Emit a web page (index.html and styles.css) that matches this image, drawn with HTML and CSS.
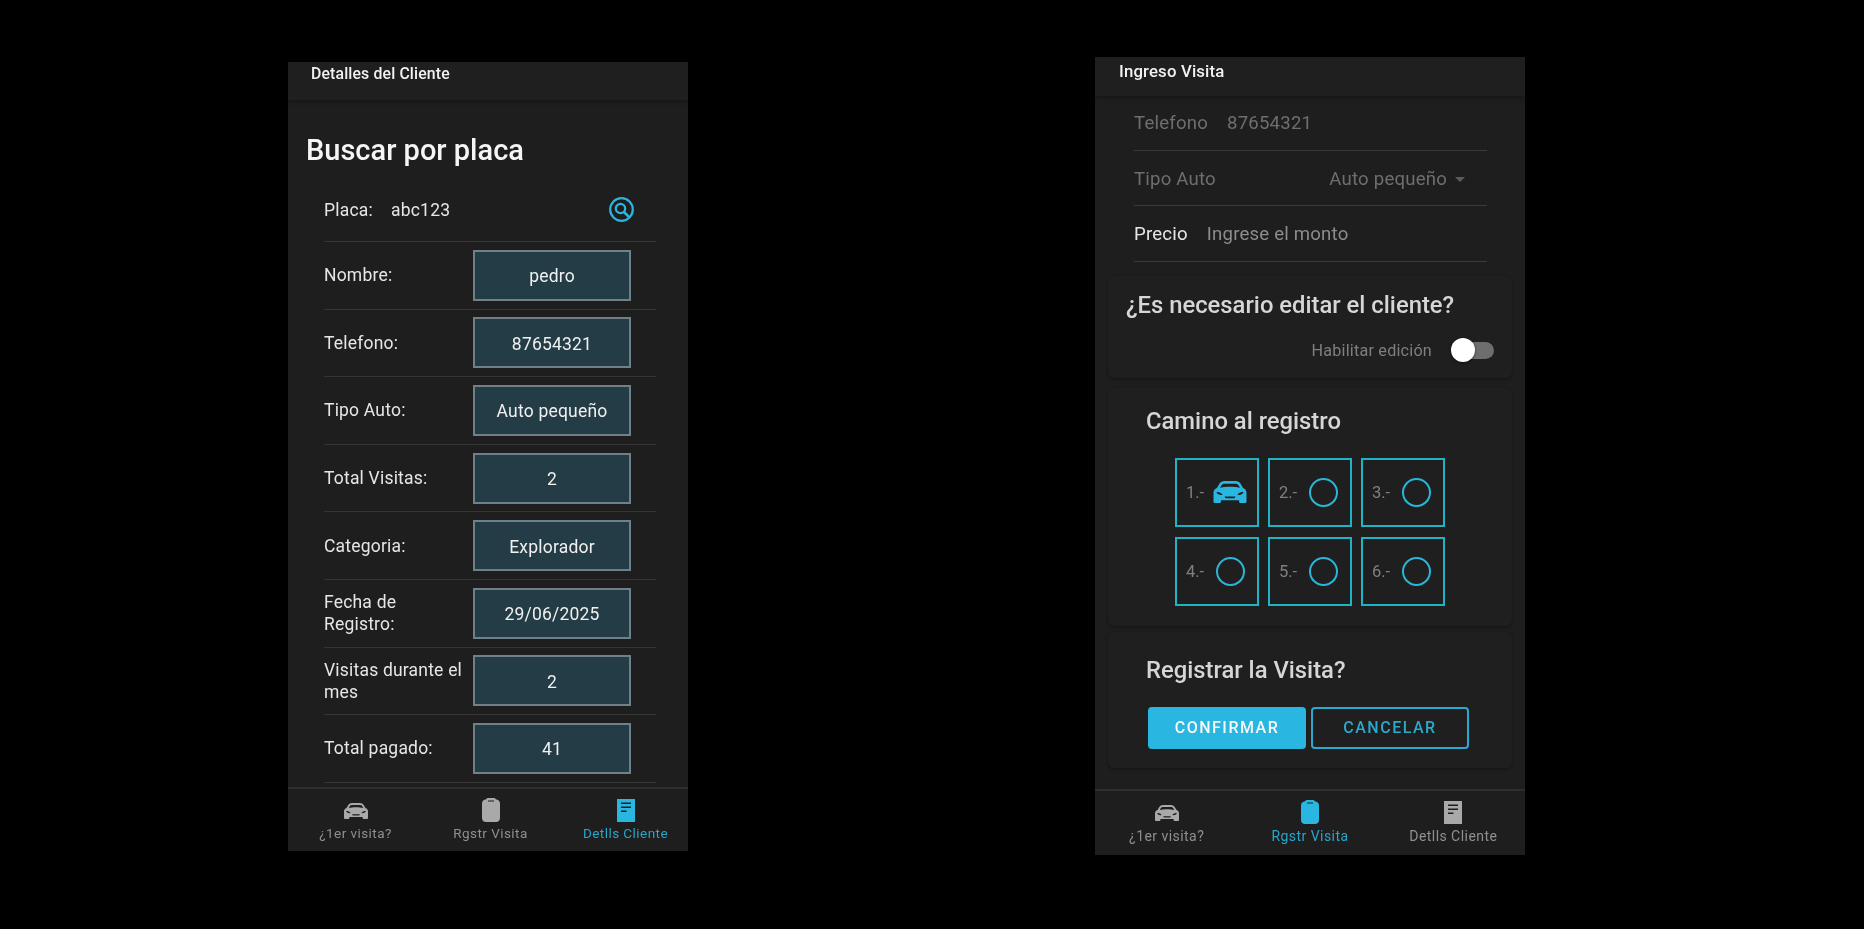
FILE: index.html
```html
<!DOCTYPE html>
<html lang="es">
<head>
  <meta charset="UTF-8" />
  <meta name="viewport" content="width=device-width, initial-scale=1.0"/>
  <title>Visitas</title>
  <link rel="stylesheet" href="styles.css">
</head>
<body>
  <svg class="sprite" xmlns="http://www.w3.org/2000/svg">
    <symbol id="icon-car" viewBox="0 0 24 16">
      <path fill-rule="evenodd" d="M8 0h8c1.600 0 2.900.7 3.700 2l1.800 3c1.500.7 2.500 1.800 2.500 3.400V15a1 1 0 0 1-1 1h-3.400a1 1 0 0 1-1-1v-1H5.400v1a1 1 0 0 1-1 1H1a1 1 0 0 1-1-1V8.400C0 6.800 1 5.700 2.500 5l1.800-3C5.100.7 6.400 0 8 0zM8 2c-1 0-1.800.4-2.300 1.200L4.800 5c2-.6 4.600-.8 7.200-.8s5.200.2 7.200.8l-.9-1.800C17.800 2.400 17 2 16 2zM2.200 8c0 1 1.300 2 3.800 2.200.4 0 .5-.5.2-.8C5.200 8.400 3.500 7.800 2.200 8zM21.800 8c0 1-1.300 2-3.800 2.200-.4 0-.5-.5-.2-.8 1-1 2.700-1.600 4-1.400zM8 11.300h8l-.8 1.200H8.800z"/>
    </symbol>
    <symbol id="icon-clipboard" viewBox="0 0 18 24">
      <path fill-rule="evenodd" d="M6 0h6c1 0 1.500.6 1.800 1.300C16.300 1.600 18 3 18 5.500V20c0 2.400-1.600 4-4 4H4c-2.400 0-4-1.600-4-4V5.500C0 3 1.700 1.600 4.200 1.300 4.500.6 5 0 6 0zM6 2.400v1.100h6V2.400z"/>
    </symbol>
    <symbol id="icon-doc" viewBox="0 0 18 23">
      <path fill-rule="evenodd" d="M0 0h18v23H0zM4 3.500v1.400h10V3.500zM4 7.500v1.400h10V7.500zM4 11.500v1.400h5.500v-1.400z"/>
    </symbol>
  </svg>

  <!-- pantalla detalles -->
  <div class="phone phone-detail">
    <div class="app-bar"><span>Detalles del Cliente</span></div>
    <div class="phone-content">
      <h1 class="search-title">Buscar por placa</h1>
      <div class="info-list">
        <div class="search-row">
          <span class="search-label">Placa:</span>
          <span class="search-value">abc123</span>
          <svg class="search-icon" viewBox="0 0 25 25">
            <circle cx="12.500" cy="12.500" r="11.300" fill="none" stroke="currentColor" stroke-width="2.200"/>
            <circle cx="11.500" cy="11.500" r="4.700" fill="none" stroke="currentColor" stroke-width="2.200"/>
            <path d="M15 15l4 4" stroke="currentColor" stroke-width="2.600" stroke-linecap="round"/>
          </svg>
        </div>
        <div class="info-row"><div class="info-label">Nombre:</div><div class="info-box">pedro</div></div>
        <div class="info-row"><div class="info-label">Telefono:</div><div class="info-box">87654321</div></div>
        <div class="info-row"><div class="info-label">Tipo Auto:</div><div class="info-box">Auto pequeño</div></div>
        <div class="info-row"><div class="info-label">Total Visitas:</div><div class="info-box">2</div></div>
        <div class="info-row"><div class="info-label">Categoria:</div><div class="info-box">Explorador</div></div>
        <div class="info-row"><div class="info-label">Fecha de Registro:</div><div class="info-box">29/06/2025</div></div>
        <div class="info-row"><div class="info-label">Visitas durante el mes</div><div class="info-box">2</div></div>
        <div class="info-row"><div class="info-label">Total pagado:</div><div class="info-box">41</div></div>
      </div>
    </div>
    <div class="bottom-nav">
      <div class="nav-item"><svg class="nav-car"><use href="#icon-car"/></svg><span>¿1er visita?</span></div>
      <div class="nav-item"><svg class="nav-clip"><use href="#icon-clipboard"/></svg><span>Rgstr Visita</span></div>
      <div class="nav-item active"><svg class="nav-doc"><use href="#icon-doc"/></svg><span>Detlls Cliente</span></div>
    </div>
  </div>

  <!-- pantalla ingreso -->
  <div class="phone phone-visit">
    <div class="app-bar"><span>Ingreso Visita</span></div>
    <div class="phone-content">
      <div class="form-list">
        <div class="form-row disabled"><span class="form-label">Telefono</span><span>87654321</span></div>
        <div class="form-row disabled between">
          <span class="form-label">Tipo Auto</span>
          <span class="form-select">Auto pequeño<i class="caret"></i></span>
        </div>
        <div class="form-row"><span class="form-label">Precio</span><span class="placeholder">Ingrese el monto</span></div>
      </div>

      <div class="card card-edit">
        <h2 class="card-title">¿Es necesario editar el cliente?</h2>
        <div class="toggle-row">
          <span>Habilitar edición</span>
          <div class="toggle"><div class="toggle-thumb"></div></div>
        </div>
      </div>

      <div class="card card-steps">
        <h2 class="card-title">Camino al registro</h2>
        <div class="step-grid">
          <div class="step"><span>1.-</span><svg class="step-car"><use href="#icon-car"/></svg></div>
          <div class="step"><span>2.-</span><i class="step-dot"></i></div>
          <div class="step"><span>3.-</span><i class="step-dot"></i></div>
          <div class="step"><span>4.-</span><i class="step-dot"></i></div>
          <div class="step"><span>5.-</span><i class="step-dot"></i></div>
          <div class="step"><span>6.-</span><i class="step-dot"></i></div>
        </div>
      </div>

      <div class="card card-confirm">
        <h2 class="card-title">Registrar la Visita?</h2>
        <div class="button-row">
          <button class="btn btn-fill">CONFIRMAR</button>
          <button class="btn btn-line">CANCELAR</button>
        </div>
      </div>
    </div>
    <div class="bottom-nav">
      <div class="nav-item"><svg class="nav-car"><use href="#icon-car"/></svg><span>¿1er visita?</span></div>
      <div class="nav-item active"><svg class="nav-clip"><use href="#icon-clipboard"/></svg><span>Rgstr Visita</span></div>
      <div class="nav-item"><svg class="nav-doc"><use href="#icon-doc"/></svg><span>Detlls Cliente</span></div>
    </div>
  </div>
</body>
</html>
```

FILE: styles.css
```css
html, body {
  height: 100%;
  margin: 0;
  padding: 0;
}

body {
  background: #000;
  font-family: 'Roboto', sans-serif;
  display: flex;
  align-items: flex-start;
  overflow: hidden;
}

.sprite {
  display: none;
}

.phone {
  background: #1e1e1e;
  display: flex;
  flex-direction: column;
  overflow: hidden;
  filter: blur(0.35px);
}

.phone-detail {
  width: 400px;
  height: 789px;
  margin: 62px 0 0 288px;
}

.phone-visit {
  width: 430px;
  height: 798px;
  margin: 57px 0 0 407px;
}

.app-bar {
  flex: none;
  height: 38px;
  padding: 2px 0 0 23px;
  box-sizing: border-box;
  color: #f2f2f2;
  font-size: 15.800px;
  font-weight: 500;
  letter-spacing: 0.15px;
  line-height: 20px;
  background: #1f1f1f;
  box-shadow: 0 2px 4px rgba(0, 0, 0, 0.25);
  z-index: 2;
}

.phone-visit .app-bar {
  height: 39px;
  padding-left: 24px;
  padding-top: 4px;
  font-size: 16.800px;
}

.phone-content {
  flex: 1;
  overflow: hidden;
}

/* detalles */
.search-title {
  margin: 0;
  padding: 32px 0 0 18px;
  height: 47px;
  color: #f5f5f5;
  font-size: 29px;
  font-weight: 500;
  line-height: 36px;
}

.info-list {
  margin: 0 32px 0 36px;
}

.search-row {
  height: 64px;
  box-sizing: border-box;
  margin-top: -1px;
  border-bottom: 1px solid #353535;
  display: flex;
  align-items: center;
  color: #e6e6e6;
  font-size: 17.500px;
  letter-spacing: 0.2px;
}

.search-label {
  width: 67px;
}

.search-value {
  flex: 1;
}

.search-icon {
  width: 25px;
  height: 25px;
  margin-right: 22px;
  color: #29b6e0;
}

.info-row {
  height: 67.600px;
  box-sizing: border-box;
  border-bottom: 1px solid #353535;
  display: flex;
  align-items: center;
  color: #e6e6e6;
  font-size: 17.500px;
  letter-spacing: 0.2px;
  line-height: 22px;
}

.info-label {
  width: 149px;
  flex: none;
  padding-right: 4px;
  box-sizing: border-box;
}

.info-box {
  width: 158px;
  height: 51px;
  box-sizing: border-box;
  background: #233c46;
  border: 2px solid #6f8088;
  display: flex;
  align-items: center;
  justify-content: center;
  padding-top: 2px;
  color: #f0f0f0;
}

/* barra inferior */
.bottom-nav {
  flex: none;
  height: 64px;
  box-sizing: border-box;
  border-top: 2px solid #2f2f2f;
  display: flex;
  background: #1e1e1e;
}

.phone-visit .bottom-nav {
  height: 66px;
}

.nav-item {
  flex: 0 0 135px;
  display: flex;
  flex-direction: column;
  align-items: center;
  color: #8f8f8f;
  font-size: 13.500px;
  letter-spacing: 0.45px;
  line-height: 18px;
}

.phone-visit .nav-item {
  flex: 1;
  font-size: 14px;
}

.nav-item svg {
  fill: #a9a9a9;
}

.nav-item span {
  margin-top: auto;
  padding-bottom: 9px;
}

.phone-visit .nav-item span {
  padding-bottom: 10px;
}

.nav-item .nav-car {
  width: 24px;
  height: 16px;
  margin-top: 14px;
}

.nav-item .nav-clip {
  width: 18px;
  height: 24px;
  margin-top: 9px;
}

.nav-item .nav-doc {
  width: 18px;
  height: 23px;
  margin-top: 10px;
}

.nav-item.active {
  color: #29a5cc;
}

.nav-item.active svg {
  fill: #29b6e0;
}

/* ingreso */
.form-list {
  margin: -1px 38px 0 39px;
}

.form-row {
  height: 55.500px;
  box-sizing: border-box;
  padding-top: 2px;
  border-bottom: 1px solid #3a3a3a;
  display: flex;
  align-items: center;
  gap: 19px;
  color: #e6e6e6;
  font-size: 18.600px;
  letter-spacing: 0.2px;
}

.form-row.disabled {
  color: #6e6e6e;
}

.form-row.between {
  justify-content: space-between;
}

.placeholder {
  color: #8c8c8c;
}

.form-select {
  display: flex;
  align-items: center;
  padding-right: 22px;
}

.caret {
  margin: 2px 0 0 8px;
  border-left: 5px solid transparent;
  border-right: 5px solid transparent;
  border-top: 5px solid #5c5c5c;
}

.card {
  margin: 0 13px;
  background: #1f1f1f;
  border-radius: 6px;
  box-sizing: border-box;
  box-shadow: 0 1px 3px rgba(0, 0, 0, 0.35);
}

.card-title {
  margin: 0;
  color: #d6d6d6;
  font-size: 23.800px;
  font-weight: 500;
  line-height: 30px;
}

.card-edit {
  height: 102px;
  margin-top: 14px;
  padding: 14px 18px 0 18px;
}

.toggle-row {
  display: flex;
  align-items: center;
  justify-content: flex-end;
  gap: 20px;
  margin-top: 21px;
  color: #7f7f7f;
  font-size: 16.200px;
  letter-spacing: 0.2px;
}

.toggle {
  width: 42px;
  height: 17px;
  border-radius: 9px;
  background: #6e6e6e;
  display: flex;
  align-items: center;
}

.toggle-thumb {
  width: 24px;
  height: 24px;
  flex: none;
  margin-left: -1px;
  border-radius: 50%;
  background: #fff;
  box-shadow: 0 1px 3px rgba(0, 0, 0, 0.5);
}

.card-steps {
  height: 238px;
  margin-top: 10px;
  padding: 18px 0 0 38px;
}

.step-grid {
  display: grid;
  grid-template-columns: repeat(3, 84px);
  grid-auto-rows: 69px;
  gap: 10px 9px;
  margin: 22px 0 0 29px;
}

.step {
  border: 2px solid #1fb4c4;
  box-sizing: border-box;
  display: flex;
  align-items: center;
  padding-left: 9px;
  gap: 9px;
  color: #808080;
  font-size: 16.500px;
}

.step-car {
  width: 34px;
  height: 22px;
  fill: #29b6e0;
}

.step-dot {
  width: 29px;
  height: 29px;
  box-sizing: border-box;
  border: 2.500px solid #29b6d8;
  border-radius: 50%;
  margin-left: 3px;
}

.card-confirm {
  height: 136px;
  margin-top: 6px;
  padding: 23px 0 0 38px;
}

.button-row {
  display: flex;
  gap: 5px;
  margin: 22px 0 0 2px;
}

.btn {
  width: 158px;
  height: 42px;
  box-sizing: border-box;
  border-radius: 4px;
  font-family: 'Roboto', sans-serif;
  font-size: 16px;
  font-weight: 500;
  letter-spacing: 1.500px;
  cursor: pointer;
}

.btn-fill {
  background: #29b6e0;
  border: none;
  color: #f8f8f8;
}

.btn-line {
  background: transparent;
  border: 2.500px solid #29a9d0;
  color: #29a9d0;
}
```
